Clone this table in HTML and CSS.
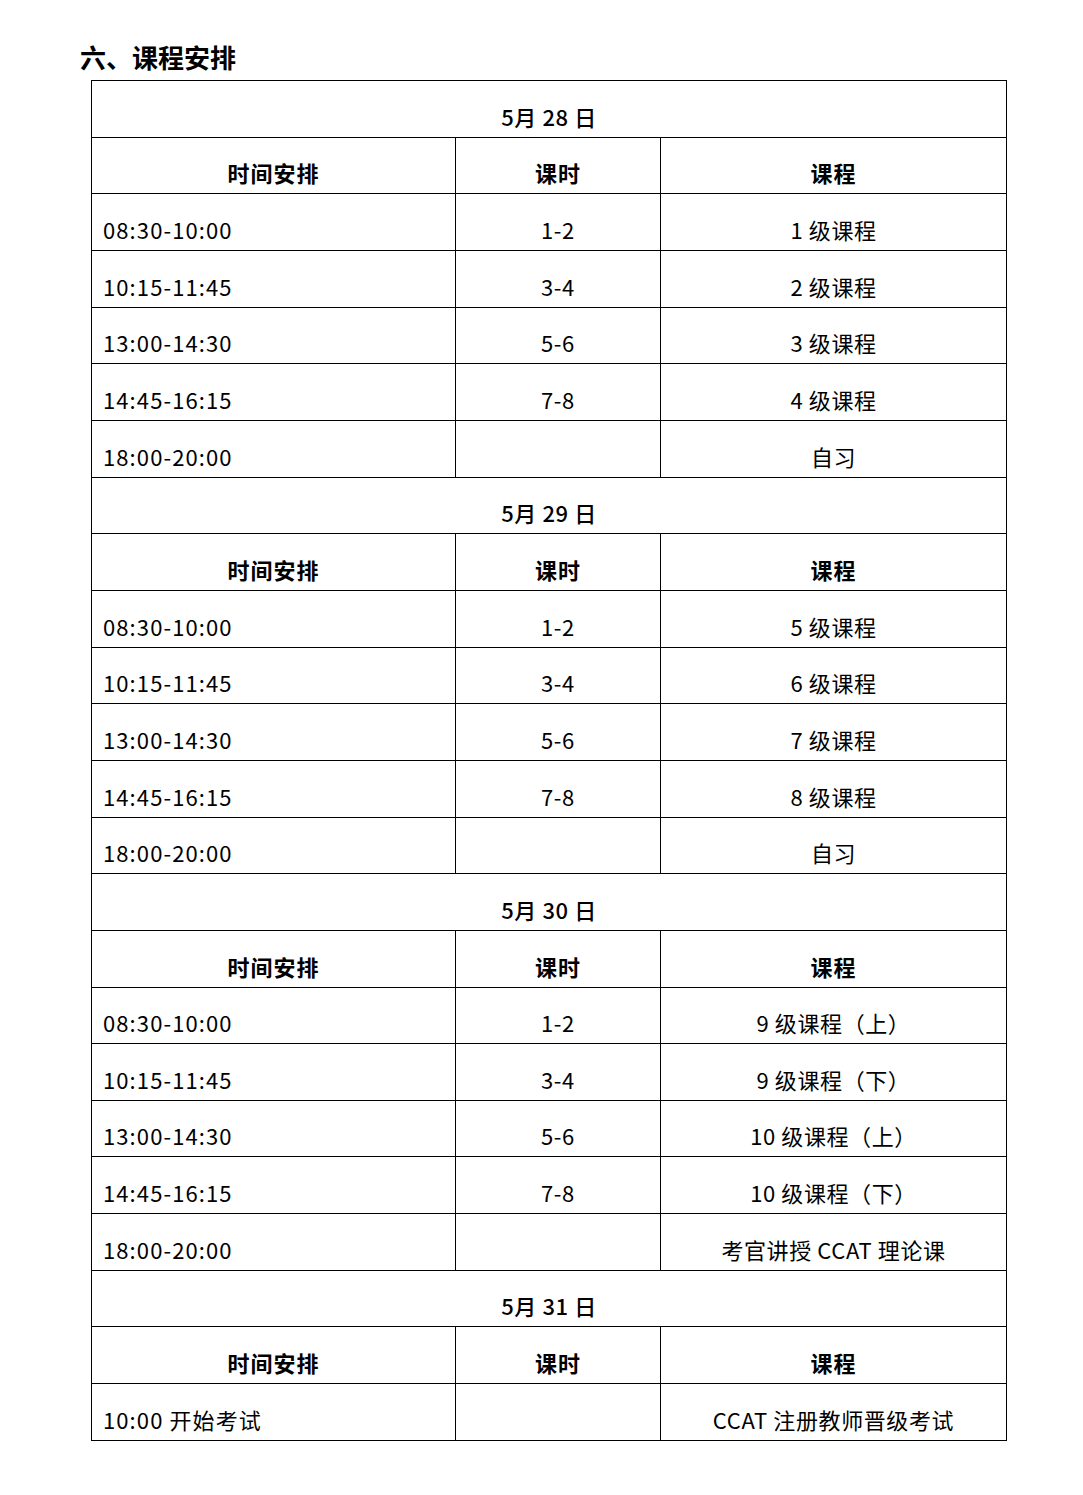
FILE: index.html
```html
<!DOCTYPE html>
<html lang="zh-CN">
<head>
<meta charset="utf-8">
<title>课程安排</title>
<link rel="stylesheet" href="styles.css">
</head>
<body>
<div class="page">
  <h2 class="title">六、课程安排</h2>
  <table class="schedule">
    <colgroup>
      <col class="c-time"><col class="c-hour"><col class="c-course">
    </colgroup>
    <tbody>
      <tr><td class="date" colspan="3">5月 28 日</td></tr>
      <tr class="head"><td>时间安排</td><td>课时</td><td>课程</td></tr>
      <tr><td class="time">08:30-10:00</td><td class="mid">1-2</td><td class="mid">1 级课程</td></tr>
      <tr><td class="time">10:15-11:45</td><td class="mid">3-4</td><td class="mid">2 级课程</td></tr>
      <tr><td class="time">13:00-14:30</td><td class="mid">5-6</td><td class="mid">3 级课程</td></tr>
      <tr><td class="time">14:45-16:15</td><td class="mid">7-8</td><td class="mid">4 级课程</td></tr>
      <tr><td class="time">18:00-20:00</td><td class="mid"></td><td class="mid">自习</td></tr>

      <tr><td class="date" colspan="3">5月 29 日</td></tr>
      <tr class="head"><td>时间安排</td><td>课时</td><td>课程</td></tr>
      <tr><td class="time">08:30-10:00</td><td class="mid">1-2</td><td class="mid">5 级课程</td></tr>
      <tr><td class="time">10:15-11:45</td><td class="mid">3-4</td><td class="mid">6 级课程</td></tr>
      <tr><td class="time">13:00-14:30</td><td class="mid">5-6</td><td class="mid">7 级课程</td></tr>
      <tr><td class="time">14:45-16:15</td><td class="mid">7-8</td><td class="mid">8 级课程</td></tr>
      <tr><td class="time">18:00-20:00</td><td class="mid"></td><td class="mid">自习</td></tr>

      <tr><td class="date" colspan="3">5月 30 日</td></tr>
      <tr class="head"><td>时间安排</td><td>课时</td><td>课程</td></tr>
      <tr><td class="time">08:30-10:00</td><td class="mid">1-2</td><td class="mid">9 级课程（上）</td></tr>
      <tr><td class="time">10:15-11:45</td><td class="mid">3-4</td><td class="mid">9 级课程（下）</td></tr>
      <tr><td class="time">13:00-14:30</td><td class="mid">5-6</td><td class="mid">10 级课程（上）</td></tr>
      <tr><td class="time">14:45-16:15</td><td class="mid">7-8</td><td class="mid">10 级课程（下）</td></tr>
      <tr><td class="time">18:00-20:00</td><td class="mid"></td><td class="mid">考官讲授 CCAT 理论课</td></tr>

      <tr><td class="date" colspan="3">5月 31 日</td></tr>
      <tr class="head"><td>时间安排</td><td>课时</td><td>课程</td></tr>
      <tr><td class="time">10:00 开始考试</td><td class="mid"></td><td class="mid">CCAT 注册教师晋级考试</td></tr>
    </tbody>
  </table>
</div>
</body>
</html>
```

FILE: styles.css
```css
html, body {
  margin: 0;
  padding: 0;
  background: #ffffff;
}

body {
  font-family: "Noto Sans CJK SC", "Liberation Sans", sans-serif;
  color: #000;
}

.page {
  padding: 41px 0 0 80px;
}

.title {
  margin: 0 0 7px 0;
  font-size: 26px;
  line-height: 32px;
  font-weight: 700;
}

.schedule {
  margin-left: 11px;
  width: 915px;
  border-collapse: collapse;
  table-layout: fixed;
}

.c-time { width: 364px; }
.c-hour { width: 205px; }
.c-course { width: 346px; }

.schedule tr {
  height: 56.67px;
}

.schedule td {
  border: 1px solid #000;
  padding: 0 0 6px 0;
  vertical-align: bottom;
  font-size: 22px;
  line-height: 30px;
  font-weight: 400;
  letter-spacing: 0.6px;
  white-space: nowrap;
}

.schedule .date {
  text-align: center;
  font-weight: 500;
}

.schedule .head td {
  text-align: center;
  font-weight: 700;
  letter-spacing: 1px;
}

.schedule .time {
  padding-left: 11px;
  letter-spacing: 1.1px;
}

.schedule .mid {
  text-align: center;
}
```
